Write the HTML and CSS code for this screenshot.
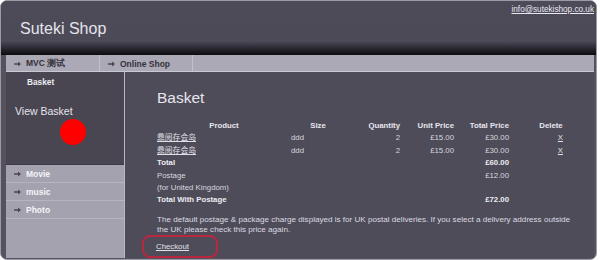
FILE: index.html
```html
<!DOCTYPE html>
<html>
<head>
<meta charset="utf-8">
<link rel="stylesheet" href="styles.css">
</head>
<body>
<div class="frame">
  <header class="header">
    <a class="email" href="#">info@sutekishop.co.uk</a>
    <div class="title">Suteki Shop</div>
  </header>
  <nav class="nav">
    <div class="nav-item"><span class="arrow"><svg width="7" height="6" viewBox="0 0 7 6"><path d="M0 2.3h4V0.5L7 3 4 5.5V3.7H0z" fill="#4a4752"/></svg></span>MVC 测试</div>
    <div class="nav-item"><span class="arrow"><svg width="7" height="6" viewBox="0 0 7 6"><path d="M0 2.3h4V0.5L7 3 4 5.5V3.7H0z" fill="#4a4752"/></svg></span>Online Shop</div>
  </nav>
  <div class="body">
    <aside class="sidebar">
      <div class="side-box">
        <div class="side-title">Basket</div>
        <div class="view-basket">View Basket</div>
        <div class="dot"></div>
      </div>
      <ul class="side-menu">
        <li><span class="arrow"><svg width="7" height="6" viewBox="0 0 7 6"><path d="M0 2.3h4V0.5L7 3 4 5.5V3.7H0z" fill="#4a4752"/></svg></span>Movie</li>
        <li><span class="arrow"><svg width="7" height="6" viewBox="0 0 7 6"><path d="M0 2.3h4V0.5L7 3 4 5.5V3.7H0z" fill="#4a4752"/></svg></span>music</li>
        <li><span class="arrow"><svg width="7" height="6" viewBox="0 0 7 6"><path d="M0 2.3h4V0.5L7 3 4 5.5V3.7H0z" fill="#4a4752"/></svg></span>Photo</li>
      </ul>
    </aside>
    <main class="main">
      <h1 class="heading">Basket</h1>
      <table class="basket">
        <colgroup>
          <col class="c1"><col class="c2"><col class="c3"><col class="c4"><col class="c5"><col class="c6">
        </colgroup>
        <thead>
          <tr><th class="center">Product</th><th class="center">Size</th><th class="right">Quantity</th><th class="right">Unit Price</th><th class="right">Total Price</th><th class="center">Delete</th></tr>
        </thead>
        <tbody>
          <tr><td><a href="#" class="cjk">鼎阅存会岛</a></td><td>ddd</td><td class="right">2</td><td class="right">£15.00</td><td class="right">£30.00</td><td class="del"><a href="#">X</a></td></tr>
          <tr><td><a href="#" class="cjk">鼎阅存会岛</a></td><td>ddd</td><td class="right">2</td><td class="right">£15.00</td><td class="right">£30.00</td><td class="del"><a href="#">X</a></td></tr>
          <tr><td class="bold">Total</td><td></td><td></td><td></td><td class="right bold">£60.00</td><td></td></tr>
          <tr><td>Postage</td><td></td><td></td><td></td><td class="right">£12.00</td><td></td></tr>
          <tr><td>(for United Kingdom)</td><td></td><td></td><td></td><td></td><td></td></tr>
          <tr><td class="bold">Total With Postage</td><td></td><td></td><td></td><td class="right bold">£72.00</td><td></td></tr>
        </tbody>
      </table>
      <p class="note">The default postage &amp; package charge displayed is for UK postal deliveries. If you select a delivery address outside the UK please check this price again.</p>
      <a href="#" class="checkout">Checkout</a>
    </main>
  </div>
</div>
</body>
</html>
```

FILE: styles.css
```css
html, body {
  margin: 0;
  padding: 0;
  background: #ffffff;
}
body {
  font-family: "Liberation Sans", Arial, sans-serif;
  width: 600px;
  height: 260px;
  overflow: hidden;
}
.frame {
  box-sizing: border-box;
  width: 597px;
  height: 260px;
  border: 1px solid #9c9aa4;
  border-radius: 7px;
  background: #55525e;
  padding: 0 2px 1px 5px;
  display: flex;
  flex-direction: column;
  overflow: hidden;
}
.header {
  height: 54px;
  flex: none;
  margin: 0 -2px 0 -5px;
  padding: 0 2px 0 5px;
  background: linear-gradient(to bottom, #4e4b58 0, #4d4a57 40px, #2c2a33 47px, #0c0b10 54px);
  position: relative;
}
.email {
  position: absolute;
  right: 2px;
  top: 4px;
  font-size: 8.2px;
  line-height: 10px;
  color: #e8e8f0;
}
.title {
  padding: 19px 0 0 14px;
  font-size: 16px;
  color: #e4e4ec;
  line-height: 18px;
}
.nav {
  flex: none;
  height: 16px;
  background: #aba9b6;
  border-bottom: 1px solid #cbc9d2;
  display: flex;
}
.nav-item {
  box-sizing: border-box;
  width: 94px;
  border-right: 1px solid #c2c0ca;
  display: flex;
  align-items: center;
  padding-left: 8px;
  padding-top: 1px;
  font-size: 8.5px;
  font-weight: bold;
  color: #34323a;
}
.nav-item + .nav-item { width: 93px; }
.arrow {
  display: inline-flex;
  width: 12px;
}
.body {
  flex: 1;
  display: flex;
  min-height: 0;
}
.sidebar {
  width: 118px;
  flex: none;
  background: #a4a2af;
  border-right: 1px solid #b9b7c2;
  display: flex;
  flex-direction: column;
}
.side-box {
  height: 92px;
  background: #494651;
  border-bottom: 1px solid #3c3a43;
  position: relative;
}
.side-title {
  padding: 5px 0 0 21px;
  font-size: 8.3px;
  font-weight: bold;
  color: #ececf2;
  line-height: 10px;
}
.view-basket {
  padding: 18px 0 0 9px;
  font-size: 10.5px;
  color: #e4e4ec;
  line-height: 12px;
}
.dot {
  position: absolute;
  left: 54px;
  top: 47px;
  width: 26px;
  height: 26px;
  border-radius: 50%;
  background: #ff0000;
}
.side-menu {
  list-style: none;
  margin: 0;
  padding: 0;
}
.side-menu li {
  height: 16px;
  border-bottom: 1px solid #b6b4c0;
  display: flex;
  align-items: center;
  padding-left: 8px;
  padding-top: 1px;
  font-size: 8.5px;
  font-weight: bold;
  color: #f4f4f8;
}
.main {
  flex: 1;
  background: #4f4c59;
  padding: 17px 0 0 32px;
  color: #dcdce4;
}
.heading {
  margin: 0;
  font-size: 15.5px;
  font-weight: normal;
  line-height: 18px;
  color: #e6e6ee;
}
.basket {
  margin-top: 13px;
  border-collapse: collapse;
  table-layout: fixed;
  width: 436px;
  font-size: 7.8px;
}
.basket col.c1 { width: 134px; }
.basket col.c2 { width: 54px; }
.basket col.c3 { width: 55px; }
.basket col.c4 { width: 54px; }
.basket col.c5 { width: 55px; }
.basket col.c6 { width: 84px; }
.basket th, .basket td {
  padding: 0;
  height: 12.4px;
  line-height: 12.4px;
  text-align: left;
  white-space: nowrap;
}
.basket th {
  font-weight: bold;
  color: #e6e6ee;
}
.basket td { color: #d6d6de; }
.basket .center { text-align: center; }
.basket .right { text-align: right; }
.basket .bold { font-weight: bold; color: #ececf2; }
.basket td.del { text-align: right; padding-right: 30px; }
.basket a { color: #e0e0e8; }
.cjk { font-family: "Liberation Sans", "Noto Sans CJK SC", sans-serif; }
.note {
  margin: 8px 0 0 0;
  width: 418px;
  font-size: 8.1px;
  line-height: 10px;
  color: #dadae2;
}
.checkout {
  display: inline-block;
  margin: 0 0 0 -15px;
  padding: 5px 27px 4px 12px;
  border: 2px solid #b8263f;
  border-radius: 8px;
  font-size: 7.8px;
  line-height: 10px;
  color: #e0e0e8;
}
```
